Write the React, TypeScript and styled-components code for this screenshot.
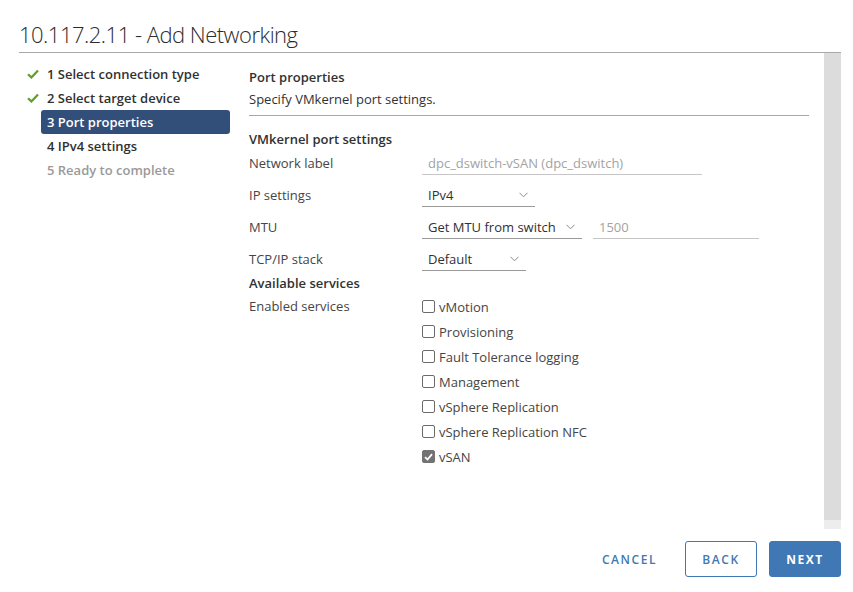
import styled, { createGlobalStyle } from "styled-components";

const GlobalStyle = createGlobalStyle`
  html, body {
    margin: 0;
    padding: 0;
    background: #fff;
  }
  body {
    font-family: "Open Sans", "Liberation Sans", sans-serif;
    color: #313131;
  }
  * {
    box-sizing: border-box;
  }
`;

const Page = styled.div`
  height: 592px;
  display: flex;
  flex-direction: column;
  padding: 0 12px 0 19px;
`;

const Header = styled.div`
  height: 53px;
  display: flex;
  align-items: flex-end;
  padding-bottom: 3px;
  border-bottom: 1px solid #a9a9a9;
`;

const Title = styled.h1`
  margin: 0;
  font-size: 22px;
  line-height: 30px;
  font-weight: 300;
  color: #2b2b2b;
  letter-spacing: -0.5px;
`;

const Main = styled.div`
  flex: 1;
  display: flex;
  min-height: 0;
`;

const Nav = styled.ul`
  list-style: none;
  margin: 0;
  padding: 9px 0 0 3px;
  width: 230px;
  flex: none;
`;

const NavItem = styled.li`
  display: flex;
  align-items: center;
  height: 24px;
`;

const IconSlot = styled.span`
  width: 19px;
  flex: none;
  display: flex;
  align-items: center;
  padding-left: 5px;
`;

const NavLabel = styled.span<{ $active?: boolean; $disabled?: boolean }>`
  width: 189px;
  height: 24px;
  line-height: 24px;
  padding-left: 6px;
  border-radius: 3px;
  font-size: 13px;
  font-weight: 600;
  background: ${(p) => (p.$active ? "#324f7a" : "transparent")};
  color: ${(p) => (p.$active ? "#fff" : p.$disabled ? "#9a9a9a" : "#313131")};
`;

const Content = styled.div`
  flex: 1;
  padding: 13px 15px 0 0;
`;

const Heading = styled.div`
  font-size: 13px;
  font-weight: 600;
  line-height: 22px;
  color: #313131;
`;

const Description = styled.div`
  font-size: 13px;
  line-height: 22px;
  color: #313131;
  padding-bottom: 5px;
  border-bottom: 1px solid #a9a9a9;
`;

const SectionHeading = styled(Heading)<{ $gap?: number }>`
  line-height: 16px;
  margin-top: ${(p) => p.$gap ?? 0}px;
`;

const FormGrid = styled.div`
  display: grid;
  grid-template-columns: 173px 1fr;
  grid-auto-rows: 32px;
  align-items: center;
`;

const Label = styled.div`
  font-size: 13px;
  color: #454545;
`;

const ControlRow = styled.div`
  display: flex;
  gap: 11px;
  align-items: center;
`;

const TextField = styled.div<{ $width: number }>`
  width: ${(p) => p.$width}px;
  height: 24px;
  line-height: 24px;
  padding-left: 6px;
  font-size: 13px;
  color: #a3a3a3;
  border-bottom: 1px solid #c6c6c6;
`;

const Select = styled.div<{ $width: number }>`
  width: ${(p) => p.$width}px;
  height: 24px;
  display: flex;
  align-items: center;
  justify-content: space-between;
  padding: 0 7px 0 6px;
  font-size: 13px;
  color: #313131;
  border-bottom: 1px solid #9a9a9a;
`;

const Services = styled.div`
  display: grid;
  grid-template-columns: 173px 1fr;
  padding-top: 3px;
`;

const ServiceList = styled.div`
  display: flex;
  flex-direction: column;
`;

const ServiceRow = styled.label`
  height: 25px;
  display: flex;
  align-items: center;
  gap: 4px;
  font-size: 13px;
  color: #454545;
`;

const ServicesLabel = styled(Label)`
  line-height: 25px;
`;

const Box = styled.span<{ $checked?: boolean }>`
  width: 13px;
  height: 13px;
  border-radius: 2px;
  border: 1px solid ${(p) => (p.$checked ? "#737373" : "#6b6b6b")};
  background: ${(p) => (p.$checked ? "#737373" : "#fff")};
  display: flex;
  align-items: center;
  justify-content: center;
  flex: none;
`;

const ScrollTrack = styled.div`
  width: 17px;
  flex: none;
  background: linear-gradient(to bottom, #dcdcdc 0, #dcdcdc calc(100% - 9px), #ededed calc(100% - 9px));
`;

const Footer = styled.div`
  display: flex;
  justify-content: flex-end;
  align-items: center;
  padding: 12px 0 15px;
`;

const Button = styled.button<{ $variant: "flat" | "outline" | "primary" }>`
  height: 36px;
  min-width: 72px;
  padding: 0 12px;
  margin-left: ${(p) => (p.$variant === "flat" ? "0" : "12px")};
  margin-right: ${(p) => (p.$variant === "flat" ? "3px" : "0")};
  border-radius: 3px;
  font-family: "Open Sans", "Liberation Sans", sans-serif;
  font-size: 12px;
  font-weight: ${(p) => (p.$variant === "primary" ? 700 : 600)};
  letter-spacing: 0.13em;
  text-transform: uppercase;
  cursor: pointer;
  border: 1px solid ${(p) => (p.$variant === "flat" ? "transparent" : "#3f78b4")};
  background: ${(p) => (p.$variant === "primary" ? "#3f78b4" : "#fff")};
  color: ${(p) => (p.$variant === "primary" ? "#fff" : "#3f78b4")};
`;

const Check = () => (
  <svg width="12" height="10" viewBox="0 0 12 10">
    <path d="M1 5.2 L4.4 8.4 L11 1.4" fill="none" stroke="#5aa220" strokeWidth="2.2" />
  </svg>
);

const Chevron = () => (
  <svg width="9" height="6" viewBox="0 0 9 6">
    <path d="M0.5 0.8 L4.5 4.8 L8.5 0.8" fill="none" stroke="#8a8a8a" strokeWidth="1" />
  </svg>
);

const BoxTick = () => (
  <svg width="9" height="8" viewBox="0 0 9 8">
    <path d="M1 4.2 L3.5 6.5 L8 1.2" fill="none" stroke="#fff" strokeWidth="1.8" />
  </svg>
);

const steps = [
  { label: "1 Select connection type", done: true },
  { label: "2 Select target device", done: true },
  { label: "3 Port properties", active: true },
  { label: "4 IPv4 settings" },
  { label: "5 Ready to complete", disabled: true },
];

const services = [
  { label: "vMotion" },
  { label: "Provisioning" },
  { label: "Fault Tolerance logging" },
  { label: "Management" },
  { label: "vSphere Replication" },
  { label: "vSphere Replication NFC" },
  { label: "vSAN", checked: true },
];

const App = () => {
  return (
    <Page>
      <GlobalStyle />
      <Header>
        <Title>10.117.2.11 - Add Networking</Title>
      </Header>
      <Main>
        <Nav>
          {steps.map((s) => (
            <NavItem key={s.label}>
              <IconSlot>{s.done && <Check />}</IconSlot>
              <NavLabel $active={s.active} $disabled={s.disabled}>
                {s.label}
              </NavLabel>
            </NavItem>
          ))}
        </Nav>
        <Content>
          <Heading>Port properties</Heading>
          <Description>Specify VMkernel port settings.</Description>
          <SectionHeading $gap={15}>VMkernel port settings</SectionHeading>
          <FormGrid>
            <Label>Network label</Label>
            <TextField $width={280}>dpc_dswitch-vSAN (dpc_dswitch)</TextField>
            <Label>IP settings</Label>
            <Select $width={113}>
              IPv4
              <Chevron />
            </Select>
            <Label>MTU</Label>
            <ControlRow>
              <Select $width={160}>
                Get MTU from switch
                <Chevron />
              </Select>
              <TextField $width={166}>1500</TextField>
            </ControlRow>
            <Label>TCP/IP stack</Label>
            <Select $width={104}>
              Default
              <Chevron />
            </Select>
          </FormGrid>
          <SectionHeading>Available services</SectionHeading>
          <Services>
            <ServicesLabel>Enabled services</ServicesLabel>
            <ServiceList>
              {services.map((s) => (
                <ServiceRow key={s.label}>
                  <Box $checked={s.checked}>{s.checked && <BoxTick />}</Box>
                  {s.label}
                </ServiceRow>
              ))}
            </ServiceList>
          </Services>
        </Content>
        <ScrollTrack />
      </Main>
      <Footer>
        <Button $variant="flat">Cancel</Button>
        <Button $variant="outline">Back</Button>
        <Button $variant="primary">Next</Button>
      </Footer>
    </Page>
  );
};

export default App;
